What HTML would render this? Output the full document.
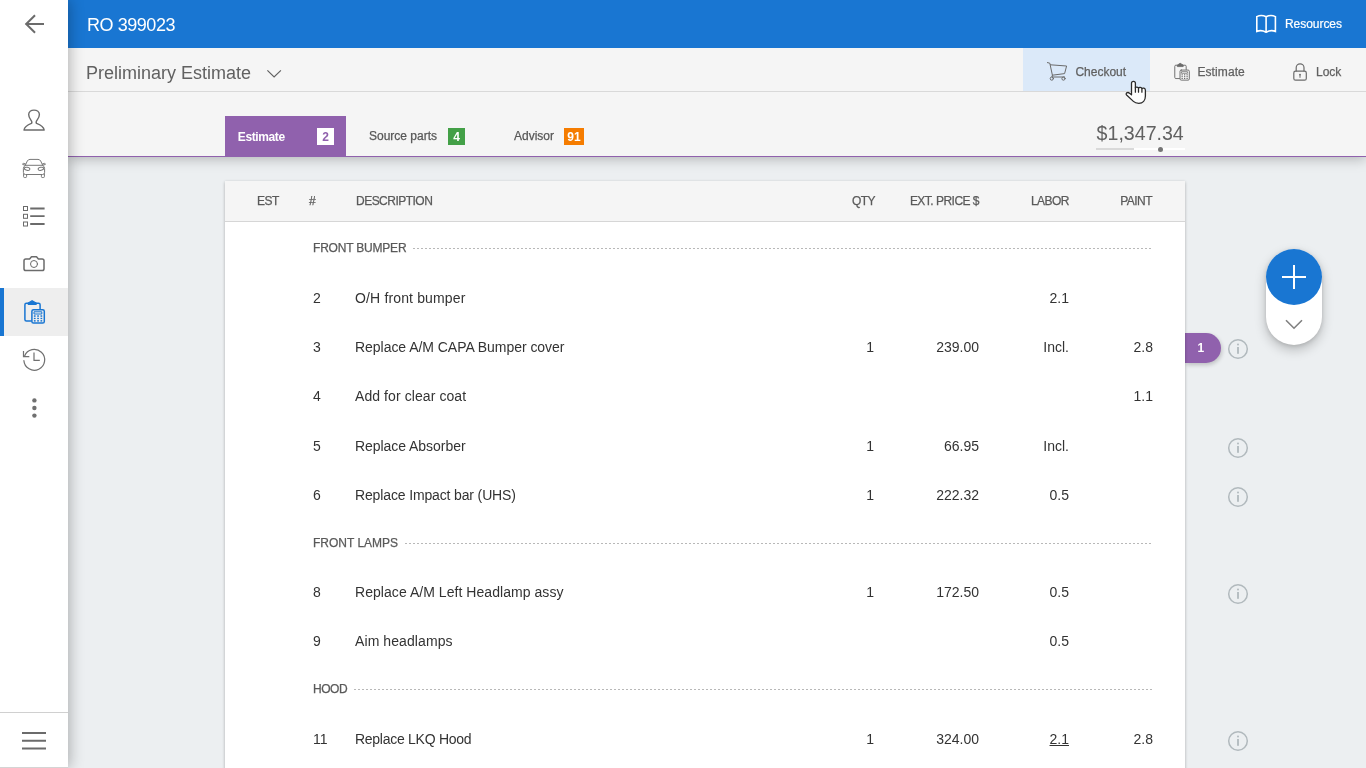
<!DOCTYPE html>
<html lang="en">
<head>
<meta charset="utf-8">
<title>RO 399023</title>
<style>
*{box-sizing:border-box;margin:0;padding:0}
html,body{width:1366px;height:768px;overflow:hidden}
html{background:#eceff1}
body{font-family:"Liberation Sans",sans-serif;background:#eceff1;color:#333;position:relative;will-change:transform}
.abs{position:absolute}
#side{position:absolute;left:0;top:0;width:68px;height:768px;background:#fff;z-index:30;box-shadow:1px 0 14px rgba(0,0,0,.3)}
#side svg{position:absolute;display:block}
#side .active{position:absolute;left:0;top:288px;width:68px;height:48px;background:#eeeeee}
#side .active:before{content:"";position:absolute;left:0;top:0;width:4px;height:48px;background:#1976d2}
#side .sep{position:absolute;left:0;top:712px;width:68px;height:1px;background:#d0d0d0}
#side:after{content:"";position:absolute;left:0;top:767px;width:68px;height:1px;background:#d4d4d4}
#top{position:absolute;left:68px;top:0;width:1298px;height:48px;background:#1976d2;color:#fff;z-index:20}
#top .title{position:absolute;left:19px;top:14.6px;font-size:18px;letter-spacing:-.45px;line-height:20px;white-space:nowrap}
#top .res{position:absolute;left:1217px;top:16px;font-size:12px;line-height:16px;white-space:nowrap;-webkit-text-stroke:.2px #fff;letter-spacing:-.05px}
#sub{position:absolute;left:68px;top:48px;width:1298px;height:44px;background:#f5f5f5;border-bottom:1px solid #d9d9d9;z-index:19}
#sub .ttl{position:absolute;left:18px;top:13.5px;font-size:18px;line-height:22px;color:#616161;white-space:nowrap}
#sub .btn{position:absolute;top:0;height:43px;font-size:12px;line-height:16px;color:#616161;white-space:nowrap;-webkit-text-stroke:.25px #616161}
#sub .btn span{position:absolute;top:15.6px}
#sub .hover{background:#dbe9f9}
#tabs{position:absolute;left:68px;top:92px;width:1298px;height:65px;background:#f5f5f5;border-bottom:1px solid #9061ad;z-index:18;box-shadow:0 2px 12px rgba(0,0,0,.25)}
.tab{position:absolute;top:24px;height:41px;font-size:12px;line-height:16px;color:#555;white-space:nowrap}
.tab .lbl{position:absolute;top:12px;-webkit-text-stroke:.25px #5c5c5c}
.tab .bdg{position:absolute;top:12px;height:17px;font-weight:bold;color:#fff;text-align:center;font-size:12px;line-height:18px}
.tab.on{background:#9061ad;color:#fff;font-weight:bold}
.tab.on .lbl{font-weight:bold;-webkit-text-stroke:0;letter-spacing:-.38px;top:12.6px}
#total{position:absolute;left:1028.6px;top:29px;font-size:19.6px;line-height:24px;color:#616161;white-space:nowrap}
#card{position:absolute;left:225px;top:181px;width:960px;height:600px;background:#fff;box-shadow:0 1px 3px rgba(0,0,0,.28);z-index:5}
#card .hd{position:absolute;left:0;top:0;width:960px;height:41px;background:#f5f5f5;border-bottom:1px solid #d6d6d6;font-size:12px;letter-spacing:-.52px;color:#5a5a5a;-webkit-text-stroke:.25px #5a5a5a}
#card .hd span{position:absolute;top:13px;line-height:14px;white-space:nowrap}
.r{position:absolute;right:0;text-align:right}
.sec{position:absolute;left:88px;width:840px;height:16px;display:flex;font-size:12px;letter-spacing:-.2px;line-height:16px;color:#5a5a5a;-webkit-text-stroke:.25px #5a5a5a;white-space:nowrap}
.sec i{flex:1;margin-left:7px;margin-top:8px;height:1px;background:repeating-linear-gradient(90deg,#b8b8b8 0,#b8b8b8 2.5px,transparent 2.5px,transparent 4px)}
.row{position:absolute;left:0;width:960px;height:20px;font-size:14px;line-height:20px;color:#333;white-space:nowrap}
.row span{position:absolute;top:0}
.row .n{left:88px}.row .d{left:130px}
.row .q{right:311px}.row .p{right:206px}.row .l{right:116px}.row .t{right:32px}
.info{position:absolute;left:1227px;z-index:6}
#ico{position:absolute;left:0;top:0;z-index:40;pointer-events:none}

#pill{position:absolute;left:1266px;top:249px;width:56px;height:96px;border-radius:28px;background:#fff;box-shadow:0 5px 12px rgba(0,0,0,.22),0 1px 4px rgba(0,0,0,.12);z-index:7}
#fab{position:absolute;left:1266px;top:249px;width:56px;height:56px;border-radius:50%;background:#1976d2;z-index:8}
#fab:before{content:"";position:absolute;left:16px;top:27px;width:24px;height:2px;background:#fff}
#fab:after{content:"";position:absolute;left:27px;top:16px;width:2px;height:24px;background:#fff}
#tag{position:absolute;left:1185px;top:333px;width:36px;height:30px;border-radius:0 15px 15px 0;background:#9061ad;color:#fff;font-weight:bold;font-size:12px;line-height:30px;padding-left:12.5px;box-shadow:1px 2px 4px rgba(0,0,0,.2);z-index:4}
#tbar{position:absolute;left:1096px;top:148px;width:89px;height:2px;background:#fff;z-index:25}
#tbar b{position:absolute;left:0;top:0;width:38px;height:2px;background:#d9d9d9}
#tbar u{position:absolute;left:62px;top:-1.5px;width:5px;height:5px;border-radius:50%;background:#757575}
</style>
</head>
<body>
<div id="side">
  <div class="active"></div>
  <div class="sep"></div>

  <svg width="68" height="768" viewBox="0 0 68 768" style="left:0;top:0" fill="none" stroke="#6b6b6b" stroke-linecap="round" stroke-linejoin="round">
    <!-- back arrow -->
    <path d="M34.3 16 L26.2 24 L34.3 32 M26.4 24 H43" stroke-width="2" stroke-linecap="square" stroke-linejoin="miter"/>
    <!-- person -->
    <path d="M24 130 H44.2 C43.6 126.6 41.2 125.2 36.6 123.4 C35.6 122.6 36.2 121.2 37.4 119.6 C38.9 117.6 39.4 115.8 39.4 114.6 C39.4 112 37 110.1 34 110.1 C31 110.1 28.7 112 28.7 114.6 C28.7 115.8 29.1 117.6 30.6 119.6 C31.8 121.2 32.4 122.6 31.4 123.4 C26.9 125.2 24.6 126.6 24 130 Z" stroke-width="1.4"/>
    <!-- car -->
    <g stroke-width="1" stroke="#787878">
      <path d="M25.3 165.3 L27.3 161 Q28.1 159.5 30 159.4 H38 Q39.9 159.5 40.7 161 L42.7 165.3"/>
      <path d="M25.4 165.3 H42.6"/>
      <path d="M24.8 165 L22.8 164.6 Q22.3 163.5 23.4 163.4 L25.3 163.8 M43.2 165 L45.2 164.6 Q45.7 163.5 44.6 163.4 L42.700 163.8"/>
      <path d="M25.3 165.3 Q23.4 166.4 23.4 168.4 V172.4 Q23.4 174.5 25.4 174.5 H42.6 Q44.6 174.5 44.6 172.400 V168.4 Q44.6 166.4 42.7 165.3"/>
      <path d="M23.6 174 V176.6 Q23.6 177.5 24.4 177.5 H25.800 Q26.6 177.5 26.6 176.6 V174.800 M41.4 174.8 V176.6 Q41.4 177.5 42.2 177.5 H43.6 Q44.4 177.5 44.4 176.6 V174"/>
      <ellipse cx="27.1" cy="168.8" rx="2.8" ry="1.5" transform="rotate(12 27.1 168.8)"/>
      <ellipse cx="40.9" cy="168.8" rx="2.8" ry="1.5" transform="rotate(-12 40.9 168.8)"/>
    </g>
    <!-- list -->
    <g stroke-width="1" stroke-linejoin="miter">
      <rect x="23.5" y="206.5" width="4" height="4"/>
      <rect x="23.5" y="214.3" width="4" height="4"/>
      <rect x="23.5" y="222" width="4" height="4"/>
    </g>
    <path d="M30.2 208.5 H44.6 M30.2 216.2 H44.6 M30.2 224 H44.6" stroke-width="1.8" stroke-linecap="butt"/>
    <!-- camera -->
    <path d="M25.8 259 H29.6 L31.5 256.8 H36.5 L38.4 259 H42.2 Q44 259 44 260.8 V268.8 Q44 270.6 42.2 270.6 H25.8 Q24 270.6 24 268.8 V260.8 Q24 259 25.8 259 Z" stroke-width="1.5"/>
    <circle cx="34" cy="264" r="3.5" stroke-width="1"/>
    <!-- estimate (active) -->
    <g stroke="#1976d2" stroke-width="1.5">
      <path d="M31.2 321 H26.4 Q24.9 321 24.9 319.5 V304.7 Q24.9 303.2 26.4 303.2 H38.6 Q40.1 303.2 40.1 304.7 V309"/>
      <path d="M28.3 304.5 V303.1 L32.1 300.7 L36.1 303.1 V304.5 Z" fill="#1976d2" stroke-width="1.2"/>
      <rect x="31.9" y="309.7" width="12.4" height="13.4" rx="1.6"/>
      <rect x="34.4" y="311.8" width="7.4" height="2.2" stroke-width="1"/>
      <g fill="#1976d2" stroke="none">
        <rect x="33.9" y="315.3" width="1.7" height="1.5"/><rect x="37.2" y="315.3" width="1.7" height="1.5"/><rect x="40.5" y="315.3" width="1.7" height="1.5"/>
        <rect x="33.9" y="317.8" width="1.7" height="1.3"/><rect x="37.2" y="317.8" width="1.7" height="1.3"/><rect x="40.5" y="317.8" width="1.7" height="1.3"/>
        <rect x="33.9" y="320.1" width="1.7" height="1.5"/><rect x="37.2" y="320.1" width="1.7" height="1.5"/><rect x="40.5" y="320.1" width="1.7" height="1.5"/>
      </g>
    </g>
    <!-- history -->
    <g stroke-width="1.2" stroke="#707070">
      <path d="M24.6 356 A10.4 10.4 0 1 1 23.9 360.6"/>
      <path d="M23.5 351 V356.6 H29.3" stroke-linecap="butt" stroke-linejoin="miter"/>
      <path d="M34 352.6 V360.3 H39.8" stroke-linecap="butt" stroke-linejoin="miter"/>
    </g>
    <!-- more -->
    <g fill="#707070" stroke="none">
      <circle cx="34.4" cy="400.4" r="2.2"/><circle cx="34.4" cy="408" r="2.2"/><circle cx="34.4" cy="415.6" r="2.2"/>
    </g>
    <!-- menu -->
    <path d="M22 733 H46 M22 740.8 H46 M22 748.6 H46" stroke-width="2" stroke-linecap="butt"/>
  </svg>
</div>
<div id="top">
  <div class="title">RO 399023</div>
  <div class="res">Resources</div>
</div>
<div id="sub">
  <div class="ttl">Preliminary Estimate</div>
  <div class="btn hover" style="left:955px;width:127px"><span style="left:52.4px">Checkout</span></div>
  <div class="btn" style="left:1082px;width:110px"><span style="left:47.4px;letter-spacing:.1px">Estimate</span></div>
  <div class="btn" style="left:1192px;width:106px"><span style="left:56px">Lock</span></div>
</div>
<div id="tabs">
  <div class="tab on" style="left:157px;width:121px"><span class="lbl" style="left:12.8px">Estimate</span><span class="bdg" style="left:92px;width:17px;background:#fff;color:#9061ad">2</span></div>
  <div class="tab" style="left:278px;width:130px"><span class="lbl" style="left:23px">Source parts</span><span class="bdg" style="left:102px;width:17px;background:#43a047">4</span></div>
  <div class="tab" style="left:408px;width:130px"><span class="lbl" style="left:38px">Advisor</span><span class="bdg" style="left:88px;width:20px;background:#f57c00">91</span></div>
  <div id="total">$1,347.34</div>
</div>

<svg id="ico" width="1366" height="120" viewBox="0 0 1366 120" fill="none" stroke-linecap="round" stroke-linejoin="round">
  <!-- book -->
  <path d="M1256.8 16.6 Q1261.4 14.4 1266.1 16.8 Q1270.8 14.4 1275.4 16.6 V31.4 Q1270.8 29.6 1266.1 32.2 Q1261.4 29.6 1256.8 31.4 Z M1266.1 16.8 V32.2" stroke="#fff" stroke-width="1.6" stroke-linejoin="miter"/>
  <!-- chevron -->
  <path d="M267.4 70.4 L274.1 76.9 L280.9 70.4" stroke="#616161" stroke-width="1.2" stroke-linecap="butt" stroke-linejoin="miter"/>
  <!-- cart -->
  <g stroke="#6b6b6b" stroke-width="1">
    <path d="M1047.4 62.6 L1049.8 63.2 L1052.4 75.2 L1064.6 73.6 L1066.6 66 L1050.4 64.8"/>
    <path d="M1052.4 75.2 L1052 77 H1064.6"/>
    <circle cx="1051.8" cy="78.6" r="1.6"/><circle cx="1063.5" cy="78.6" r="1.6"/>
  </g>
  <!-- estimate small -->
  <g stroke="#6b6b6b" stroke-width="1" transform="translate(1156.1 -162.2) scale(0.75)">
      <path d="M31.2 321 H26.4 Q24.9 321 24.9 319.5 V304.7 Q24.9 303.2 26.4 303.2 H38.6 Q40.1 303.2 40.1 304.7 V309" stroke-width="1.25"/>
      <path d="M28.3 304.5 V303.1 L32.1 300.7 L36.1 303.1 V304.5 Z" fill="#6b6b6b" stroke-width="1.2"/>
      <rect x="31.9" y="309.7" width="12.4" height="13.4" rx="1.6" stroke-width="1.25"/>
      <rect x="34.4" y="311.8" width="7.4" height="2.2" stroke-width="1"/>
      <g fill="#6b6b6b" stroke="none">
        <rect x="33.9" y="315.3" width="1.7" height="1.5"/><rect x="37.2" y="315.3" width="1.7" height="1.5"/><rect x="40.5" y="315.3" width="1.7" height="1.5"/>
        <rect x="33.9" y="317.8" width="1.7" height="1.3"/><rect x="37.2" y="317.8" width="1.7" height="1.3"/><rect x="40.5" y="317.8" width="1.7" height="1.3"/>
        <rect x="33.9" y="320.1" width="1.7" height="1.5"/><rect x="37.2" y="320.1" width="1.7" height="1.5"/><rect x="40.5" y="320.1" width="1.7" height="1.5"/>
      </g>
  </g>
  <!-- lock -->
  <g stroke="#6b6b6b" stroke-width="1.2">
    <rect x="1293.8" y="71.2" width="12.5" height="9" rx="1.8"/>
    <path d="M1296.2 71 V67.8 A3.9 3.9 0 0 1 1304 67.800 V71"/>
    <circle cx="1300" cy="74.6" r="0.9" fill="#6b6b6b" stroke="none"/>
    <path d="M1300 75 V77.4" stroke-width="1"/>
  </g>
  <!-- cursor -->
  <g stroke="#2b2b2b" stroke-width="1.3" fill="#fff">
    <path d="M1131.5 94.8 V83.3 a1.95 1.95 0 0 1 3.9 0 V87.7 c0.5 -0.8 2.7 -0.8 3.1 0.4 c0.6 -1 3 -0.9 3.4 0.5 c0.8 -1 3.5 -0.6 3.5 1.6 V96 c0 4.2 -2.6 7.3 -6.6 7.3 c-2.8 0 -4 -0.5 -5.4 -1.9 L1126.6 95 c-0.9 -0.9 -0.3 -2.4 1 -2.5 c0.8 -0.1 1.4 0.2 1.9 0.7 Z"/>
    <path d="M1135.4 87.6 V92.2 M1138.5 88.2 V92.2 M1141.9 88.8 V92.2" fill="none"/>
  </g>
</svg>
<div id="card">
  <div class="hd">
    <span style="left:32px">EST</span><span style="left:84px">#</span><span style="left:131px">DESCRIPTION</span>
    <span class="r" style="right:310px">QTY</span><span class="r" style="right:206px">EXT. PRICE $</span><span class="r" style="right:116px">LABOR</span><span class="r" style="right:33px">PAINT</span>
  </div>
  <div class="sec" style="top:59px">FRONT BUMPER<i></i></div>
  <div class="row" style="top:107px"><span class="n">2</span><span class="d" style="letter-spacing:0.15px">O/H front bumper</span><span class="l">2.1</span></div>
  <div class="row" style="top:156px"><span class="n">3</span><span class="d" style="letter-spacing:-0.04px">Replace A/M CAPA Bumper cover</span><span class="q">1</span><span class="p">239.00</span><span class="l">Incl.</span><span class="t">2.8</span></div>
  <div class="row" style="top:205px"><span class="n">4</span><span class="d" style="letter-spacing:0.08px">Add for clear coat</span><span class="t">1.1</span></div>
  <div class="row" style="top:255px"><span class="n">5</span><span class="d" style="letter-spacing:-0.05px">Replace Absorber</span><span class="q">1</span><span class="p">66.95</span><span class="l">Incl.</span></div>
  <div class="row" style="top:304px"><span class="n">6</span><span class="d" style="letter-spacing:-0.14px">Replace Impact bar (UHS)</span><span class="q">1</span><span class="p">222.32</span><span class="l">0.5</span></div>
  <div class="sec" style="top:354px;letter-spacing:0">FRONT LAMPS<i></i></div>
  <div class="row" style="top:401px"><span class="n">8</span><span class="d" style="letter-spacing:0.05px">Replace A/M Left Headlamp assy</span><span class="q">1</span><span class="p">172.50</span><span class="l">0.5</span></div>
  <div class="row" style="top:450px"><span class="n">9</span><span class="d" style="letter-spacing:0.09px">Aim headlamps</span><span class="l">0.5</span></div>
  <div class="sec" style="top:500px;letter-spacing:-.45px">HOOD<i></i></div>
  <div class="row" style="top:548px"><span class="n">11</span><span class="d" style="letter-spacing:-0.27px">Replace LKQ Hood</span><span class="q">1</span><span class="p">324.00</span><span class="l" style="text-decoration:underline">2.1</span><span class="t">2.8</span></div>
</div>

<div id="pill"><svg width="56" height="96" viewBox="0 0 56 96" fill="none"><path d="M20 71.2 L28 79.2 L36 71.2" stroke="#808080" stroke-width="1.6"/></svg></div>
<div id="fab"></div>
<div id="tag">1</div>
<div id="tbar"><b></b><u></u></div>
<svg class="info" style="top:338px" width="22" height="22" viewBox="0 0 22 22" fill="none"><circle cx="11" cy="11" r="9.3" stroke="#b1b9bd" stroke-width="1.5"/><circle cx="11" cy="6.600" r="1" fill="#b1b9bd"/><rect x="10.1" y="9" width="1.8" height="6.800" fill="#b1b9bd"/></svg>
<svg class="info" style="top:437px" width="22" height="22" viewBox="0 0 22 22" fill="none"><circle cx="11" cy="11" r="9.3" stroke="#b1b9bd" stroke-width="1.5"/><circle cx="11" cy="6.600" r="1" fill="#b1b9bd"/><rect x="10.1" y="9" width="1.8" height="6.800" fill="#b1b9bd"/></svg>
<svg class="info" style="top:486px" width="22" height="22" viewBox="0 0 22 22" fill="none"><circle cx="11" cy="11" r="9.3" stroke="#b1b9bd" stroke-width="1.5"/><circle cx="11" cy="6.600" r="1" fill="#b1b9bd"/><rect x="10.1" y="9" width="1.8" height="6.800" fill="#b1b9bd"/></svg>
<svg class="info" style="top:583px" width="22" height="22" viewBox="0 0 22 22" fill="none"><circle cx="11" cy="11" r="9.3" stroke="#b1b9bd" stroke-width="1.5"/><circle cx="11" cy="6.600" r="1" fill="#b1b9bd"/><rect x="10.1" y="9" width="1.8" height="6.800" fill="#b1b9bd"/></svg>
<svg class="info" style="top:730px" width="22" height="22" viewBox="0 0 22 22" fill="none"><circle cx="11" cy="11" r="9.3" stroke="#b1b9bd" stroke-width="1.5"/><circle cx="11" cy="6.600" r="1" fill="#b1b9bd"/><rect x="10.1" y="9" width="1.8" height="6.800" fill="#b1b9bd"/></svg>
</body>
</html>
